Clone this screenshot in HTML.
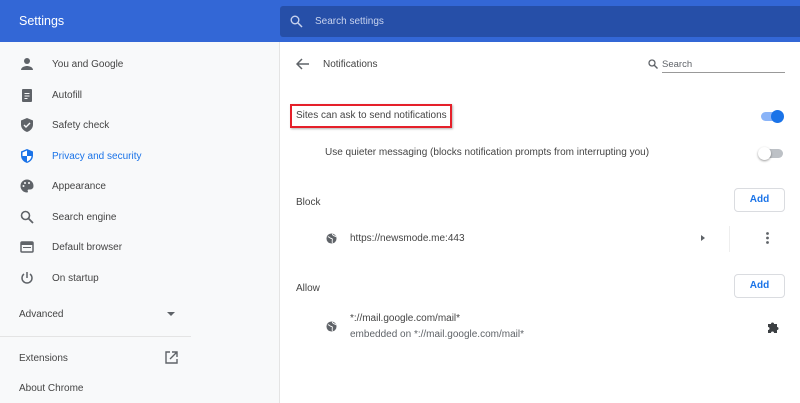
<!DOCTYPE html>
<html><head><meta charset="utf-8"><style>
*{margin:0;padding:0;box-sizing:border-box}
body{width:800px;height:403px;overflow:hidden;font-family:"Liberation Sans",sans-serif;background:#fff;position:relative;color:#202124}
.hdr{position:absolute;left:0;top:0;width:800px;height:42px;background:#3367d6}
.hdr .t{position:absolute;left:19px;top:14px;color:#fff;font-size:12.5px}
.sb{position:absolute;left:280px;top:6px;width:520px;height:31px;background:#264fa8;border-radius:3px 0 0 3px}
.sb span{position:absolute;left:35px;top:10px;color:#c8d3ee;font-size:10px}
.side{position:absolute;left:0;top:42px;width:280px;height:361px;background:#f8f9fa;border-right:1px solid #e4e4e4}
.it{position:absolute;left:52px;font-size:10px;color:#444;line-height:12px}
.ic{position:absolute;left:19px;width:16px;height:16px}
.tx{position:absolute;font-size:10px;color:#444;white-space:nowrap;line-height:12px}
.btn{position:absolute;left:734px;width:51px;height:24px;border:1px solid #dadce0;border-radius:4px;color:#1a73e8;font-size:10px;text-align:center;line-height:22px;font-weight:600}
</style></head><body>
<div class="hdr"><div class="t">Settings</div>
<div class="sb"><svg style="position:absolute;left:10px;top:9px" width="13" height="13" viewBox="0 0 13 13"><circle cx="5" cy="5" r="3.8" fill="none" stroke="#c8d3ee" stroke-width="1.4"/><path d="M8 8l4 4" stroke="#c8d3ee" stroke-width="1.5"/></svg><span>Search settings</span></div></div>
<div class="side">
<svg class="ic" style="top:14px" viewBox="0 0 16 16"><circle cx="8" cy="5" r="3" fill="#5f6368"/><path d="M2 14c0-3 4-4 6-4s6 1 6 4z" fill="#5f6368"/></svg><div class="it" style="top:17px">You and Google</div>
<svg class="ic" style="top:45px" viewBox="0 0 16 16"><rect x="3" y="2" width="10" height="13" rx="1" fill="#5f6368"/><rect x="5.5" y="6" width="5" height="1" fill="#f8f9fa"/><rect x="5.5" y="8.5" width="5" height="1" fill="#f8f9fa"/><rect x="5.5" y="11" width="3" height="1" fill="#f8f9fa"/></svg><div class="it" style="top:48px">Autofill</div>
<svg class="ic" style="top:75px" viewBox="0 0 16 16"><path d="M8 1l6 2.5v4c0 4-3 6.5-6 7.5C5 14 2 11.5 2 7.5v-4z" fill="#5f6368"/><path d="M5 8l2 2 4-4" stroke="#f8f9fa" stroke-width="1.4" fill="none"/></svg><div class="it" style="top:78px">Safety check</div>
<svg class="ic" style="top:106px" viewBox="0 0 16 16"><path d="M8 1l6 2.5v4c0 4-3 6.5-6 7.5C5 14 2 11.5 2 7.5v-4z" fill="#1a73e8"/><path d="M8 2.5v5.5H3.5V4.5zM8 8h4.5c-.3 3-2.3 4.8-4.5 5.6z" fill="#fff"/></svg><div class="it" style="top:109px;color:#1a73e8">Privacy and security</div>
<svg class="ic" style="top:136px" viewBox="0 0 16 16"><path d="M8 1.5a6.5 6.5 0 000 13c1 0 1.2-.8.8-1.4-.5-.7 0-1.6.9-1.6h1.5A3.3 3.3 0 0014.5 8 6.5 6.5 0 008 1.5z" fill="#5f6368"/><circle cx="4.5" cy="8" r="1" fill="#f8f9fa"/><circle cx="6" cy="5" r="1" fill="#f8f9fa"/><circle cx="10" cy="5" r="1" fill="#f8f9fa"/></svg><div class="it" style="top:139px">Appearance</div>
<svg class="ic" style="top:167px" viewBox="0 0 16 16"><circle cx="6.5" cy="6.5" r="4" fill="none" stroke="#5f6368" stroke-width="1.6"/><path d="M9.5 9.5l4.5 4.5" stroke="#5f6368" stroke-width="1.8"/></svg><div class="it" style="top:170px">Search engine</div>
<svg class="ic" style="top:197px" viewBox="0 0 16 16"><rect x="2" y="3" width="12" height="10" rx="1" fill="none" stroke="#5f6368" stroke-width="1.5"/><rect x="2" y="3" width="12" height="3" fill="#5f6368"/><rect x="4" y="8" width="8" height="1" fill="#5f6368"/></svg><div class="it" style="top:200px">Default browser</div>
<svg class="ic" style="top:228px" viewBox="0 0 16 16"><path d="M8 2v6" stroke="#5f6368" stroke-width="1.5"/><path d="M5 4a5 5 0 106 0" fill="none" stroke="#5f6368" stroke-width="1.5"/></svg><div class="it" style="top:231px">On startup</div>
<div class="it" style="left:19px;top:267px">Advanced</div>
<svg style="position:absolute;left:167px;top:270px" width="8" height="5"><path d="M0 0h8L4 4z" fill="#5f6368"/></svg>
<div style="position:absolute;left:0;top:294px;width:191px;height:1px;background:#e4e4e4"></div>
<div class="it" style="left:19px;top:311px">Extensions</div>
<svg style="position:absolute;left:165px;top:309px" width="13" height="13" viewBox="0 0 13 13"><path d="M5 1H1v11h11V8" fill="none" stroke="#5f6368" stroke-width="1.4"/><path d="M7 1h5v5M12 1L5 8" fill="none" stroke="#5f6368" stroke-width="1.4"/></svg>
<div class="it" style="left:19px;top:341px">About Chrome</div>
</div>
<svg style="position:absolute;left:296px;top:58px" width="13" height="12"><path d="M6 1L1 6l5 5M1 6h12" fill="none" stroke="#5f6368" stroke-width="1.5"/></svg>
<div class="tx" style="left:323px;top:59px">Notifications</div>
<svg style="position:absolute;left:648px;top:59px" width="10" height="10"><circle cx="4" cy="4" r="3" fill="none" stroke="#5f6368" stroke-width="1.3"/><path d="M6 6l3.5 3.5" stroke="#5f6368" stroke-width="1.4"/></svg>
<div class="tx" style="left:662px;top:59px;font-size:9.5px;color:#5f6368">Search</div>
<div style="position:absolute;left:662px;top:72px;width:123px;height:1px;background:#999"></div>
<div style="position:absolute;left:290px;top:104px;width:162px;height:24px;border:2px solid #e5202a;box-shadow:1px 1px 2px rgba(0,0,0,.3)"></div>
<div class="tx" style="left:296px;top:110px">Sites can ask to send notifications</div>
<div style="position:absolute;left:761px;top:112px;width:22px;height:9px;border-radius:5px;background:#8ab4f8"></div>
<div style="position:absolute;left:771px;top:110px;width:13px;height:13px;border-radius:50%;background:#1a73e8"></div>
<div class="tx" style="left:325px;top:147px">Use quieter messaging (blocks notification prompts from interrupting you)</div>
<div style="position:absolute;left:761px;top:149px;width:22px;height:9px;border-radius:5px;background:#bdc1c6"></div>
<div style="position:absolute;left:758px;top:147px;width:13px;height:13px;border-radius:50%;background:#fff;box-shadow:0 1px 2px rgba(0,0,0,.4)"></div>
<div class="tx" style="left:296px;top:197px">Block</div>
<div class="btn" style="top:188px">Add</div>
<svg style="position:absolute;left:326px;top:233px" width="11" height="11" viewBox="0 0 12 12"><circle cx="6" cy="6" r="5.5" fill="#5f6368"/><path d="M2 4c2 0 2 2 4 2s0 3 1 5M7 1c0 2 2 2 4 3" stroke="#fff" stroke-width="1" fill="none"/></svg>
<div class="tx" style="left:350px;top:233px">https://newsmode.me:443</div>
<svg style="position:absolute;left:701px;top:235px" width="4" height="6"><path d="M0 0l4 3-4 3z" fill="#5f6368"/></svg>
<div style="position:absolute;left:729px;top:226px;width:1px;height:26px;background:#eee"></div>
<svg style="position:absolute;left:766px;top:232px" width="3" height="12"><circle cx="1.5" cy="1.5" r="1.4" fill="#5f6368"/><circle cx="1.5" cy="6" r="1.4" fill="#5f6368"/><circle cx="1.5" cy="10.5" r="1.4" fill="#5f6368"/></svg>
<div class="tx" style="left:296px;top:283px">Allow</div>
<div class="btn" style="top:274px">Add</div>
<svg style="position:absolute;left:326px;top:321px" width="11" height="11" viewBox="0 0 12 12"><circle cx="6" cy="6" r="5.5" fill="#5f6368"/><path d="M2 4c2 0 2 2 4 2s0 3 1 5M7 1c0 2 2 2 4 3" stroke="#fff" stroke-width="1" fill="none"/></svg>
<div class="tx" style="left:350px;top:313px">*://mail.google.com/mail*</div>
<div class="tx" style="left:350px;top:329px;color:#5f6368">embedded on *://mail.google.com/mail*</div>
<svg style="position:absolute;left:766px;top:320px" width="14" height="14" viewBox="0 0 14 14"><path d="M2 4h3a1.5 1.5 0 013 0h3v3a1.5 1.5 0 010 3v3H8a1.5 1.5 0 00-3 0H2v-3a1.5 1.5 0 000-3z" fill="#3c4043"/></svg>
</body></html>
